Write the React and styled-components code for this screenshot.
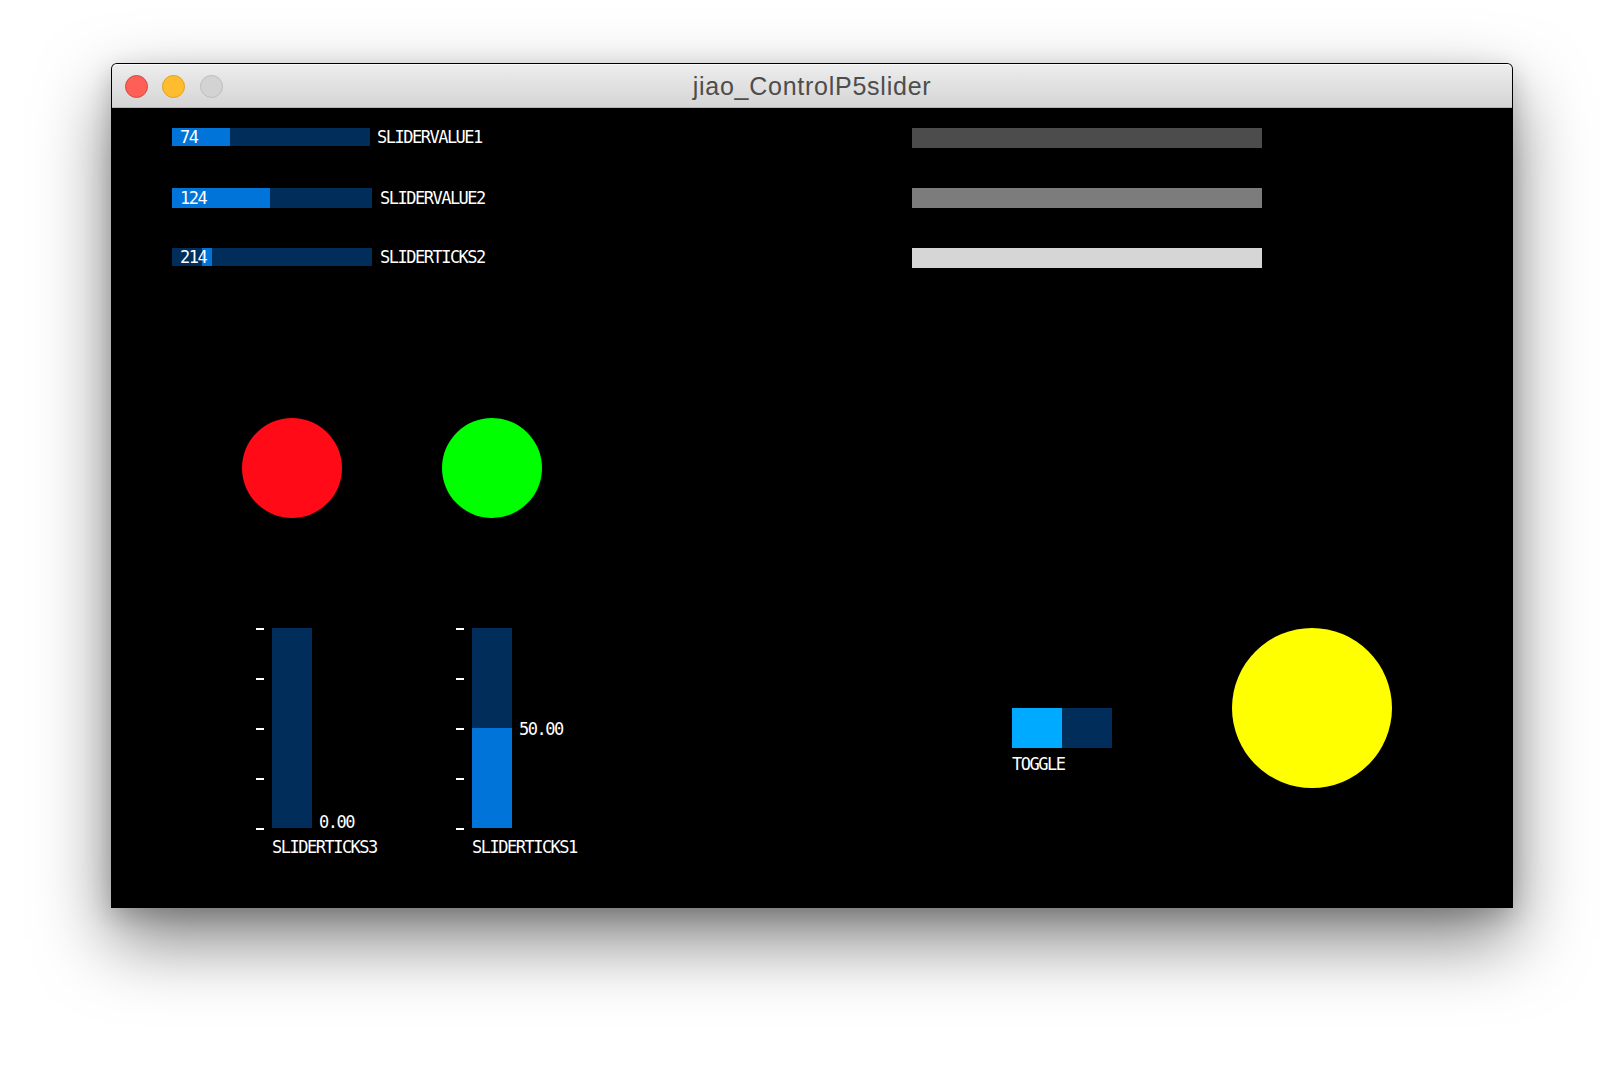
import React from "react";
import styled, { createGlobalStyle } from "styled-components";

const Global = createGlobalStyle`
  html, body { margin: 0; padding: 0; background: #ffffff; }
  body { width: 1624px; height: 1068px; overflow: hidden; }
  * { box-sizing: border-box; }
`;

const PIXEL_FONT = `"DejaVu Sans Mono", "Liberation Mono", monospace`;

const Page = styled.div`
  display: flex;
  padding: 63px 0 0 111px;
  width: 1624px;
  height: 1068px;
`;

const Window = styled.div`
  width: 1402px;
  display: flex;
  flex-direction: column;
  border: 1px solid rgba(0, 0, 0, 0.18);
  border-bottom: none;
  border-radius: 6px 6px 0 0;
  align-self: flex-start;
  box-shadow: 0 32px 72px rgba(0, 0, 0, 0.5), 0 8px 24px rgba(0, 0, 0, 0.18);
  background: #000;
`;

const TitleBar = styled.div`
  height: 44px;
  display: grid;
  grid-template-columns: 200px 1fr 200px;
  align-items: center;
  background: linear-gradient(#ededed, #d5d5d5);
  border-radius: 5px 5px 0 0;
  border-bottom: 1px solid #b3b3b3;
  box-shadow: inset 0 1px 0 rgba(255, 255, 255, 0.7);
`;

const Lights = styled.div`
  display: flex;
  gap: 14.3px;
  padding-left: 13px;
  padding-top: 1px;
`;

const Light = styled.span`
  width: 23px;
  height: 23px;
  border-radius: 50%;
  background: ${(p) => p.$fill};
  border: 1px solid ${(p) => p.$edge};
`;

const Title = styled.div`
  text-align: center;
  font-family: "Liberation Sans", Arial, sans-serif;
  font-size: 25px;
  letter-spacing: 0.75px;
  color: #4d4d4d;
  padding-top: 1px;
`;

const Canvas = styled.div`
  width: 1400px;
  height: 800px;
  background: #000;
  display: flex;
  flex-direction: column;
  font-family: ${PIXEL_FONT};
  color: #fff;
`;

const TopArea = styled.div`
  display: flex;
  padding: 20px 0 0 60px;
`;

const SliderColumn = styled.div`
  width: 740px;
  display: flex;
  flex-direction: column;
`;

const SliderRow = styled.div`
  display: flex;
  align-items: center;
  margin-top: ${(p) => p.$top}px;
`;

const HBar = styled.div`
  position: relative;
  width: ${(p) => p.$w}px;
  height: ${(p) => p.$h}px;
  background: #002d5a;
  display: flex;
  align-items: center;
`;

const HFill = styled.div`
  position: absolute;
  top: 0;
  bottom: 0;
  background: #0074d9;
`;

const PixelText = styled.span`
  font-family: ${PIXEL_FONT};
  font-size: 17px;
  line-height: 17px;
  letter-spacing: -1.5px;
  color: #ffffff;
  white-space: nowrap;
`;

const HValue = styled(PixelText)`
  position: relative;
  padding-left: 8px;
`;

const HLabel = styled(PixelText)`
  margin-left: ${(p) => p.$gap}px;
`;

const GrayColumn = styled.div`
  display: flex;
  flex-direction: column;
  gap: 40px;
`;

const GrayBar = styled.div`
  width: 350px;
  height: 20px;
  background: ${(p) => p.$c};
`;

const CircleRow = styled.div`
  display: flex;
  gap: 100px;
  margin-top: 150px;
  padding-left: 130px;
`;

const Dot = styled.div`
  width: ${(p) => p.$d}px;
  height: ${(p) => p.$d}px;
  border-radius: 50%;
  background: ${(p) => p.$c};
`;

const BottomRow = styled.div`
  display: flex;
  margin-top: 110px;
  padding-left: 144px;
`;

const VGroup = styled.div`
  width: ${(p) => p.$w}px;
  display: flex;
  flex-direction: column;
`;

const VTop = styled.div`
  display: flex;
  gap: 8px;
`;

const Ticks = styled.div`
  width: 8px;
  height: 202px;
  display: flex;
  flex-direction: column;
  justify-content: space-between;
`;

const Tick = styled.span`
  width: 8px;
  height: 2px;
  background: #ffffff;
`;

const VBar = styled.div`
  position: relative;
  width: 40px;
  height: 200px;
  background: #002d5a;
  display: flex;
  flex-direction: column;
  justify-content: flex-end;
`;

const VFill = styled.div`
  width: 100%;
  background: #0074d9;
`;

const VValue = styled(PixelText)`
  position: absolute;
  left: calc(100% + 7px);
`;

const VLabel = styled(PixelText)`
  margin: 9px 0 0 16px;
`;

const ToggleGroup = styled.div`
  width: 220px;
  margin-top: 80px;
  display: flex;
  flex-direction: column;
`;

const ToggleBox = styled.div`
  display: flex;
  width: 100px;
  height: 40px;
`;

const ToggleHalf = styled.div`
  flex: 1;
  background: ${(p) => (p.$on ? "#00aaff" : "#002d5a")};
`;

const ToggleLabel = styled(PixelText)`
  margin-top: 8px;
`;

function HSlider({ top, w, h, value, fillLeft, fillWidth, label, gap }) {
  return (
    <SliderRow $top={top}>
      <HBar $w={w} $h={h}>
        <HFill style={{ left: fillLeft, width: fillWidth }} />
        <HValue>{value}</HValue>
      </HBar>
      <HLabel $gap={gap}>{label}</HLabel>
    </SliderRow>
  );
}

function VSlider({ value, label, width }) {
  const H = 200;
  const pos = H * (1 - value / 100);
  const textTop = Math.min(pos - 7, H - 14);
  return (
    <VGroup $w={width}>
      <VTop>
        <Ticks>
          {[0, 1, 2, 3, 4].map((i) => (
            <Tick key={i} />
          ))}
        </Ticks>
        <VBar>
          <VFill style={{ height: (H * value) / 100 }} />
          <VValue style={{ top: textTop }}>{value.toFixed(2)}</VValue>
        </VBar>
      </VTop>
      <VLabel>{label}</VLabel>
    </VGroup>
  );
}

export default function App() {
  return (
    <>
      <Global />
      <Page>
        <Window>
          <TitleBar>
            <Lights>
              <Light $fill="#fe5f57" $edge="#e0443e" />
              <Light $fill="#febc2e" $edge="#dea123" />
              <Light $fill="#d3d3d3" $edge="#bdbdbd" />
            </Lights>
            <Title>jiao_ControlP5slider</Title>
            <span />
          </TitleBar>
          <Canvas>
            <TopArea>
              <SliderColumn>
                <HSlider top={0} w={198} h={18} value="74" fillLeft={0} fillWidth={58} label="SLIDERVALUE1" gap={7} />
                <HSlider top={42} w={200} h={20} value="124" fillLeft={0} fillWidth={98} label="SLIDERVALUE2" gap={8} />
                <HSlider top={40} w={200} h={18} value="214" fillLeft={30} fillWidth={10} label="SLIDERTICKS2" gap={8} />
              </SliderColumn>
              <GrayColumn>
                <GrayBar $c="#4c4c4c" />
                <GrayBar $c="#7c7c7c" />
                <GrayBar $c="#d6d6d6" />
              </GrayColumn>
            </TopArea>
            <CircleRow>
              <Dot $d={100} $c="#ff0a16" />
              <Dot $d={100} $c="#00ff00" />
            </CircleRow>
            <BottomRow>
              <VSlider value={0} label="SLIDERTICKS3" width={200} />
              <VSlider value={50} label="SLIDERTICKS1" width={556} />
              <ToggleGroup>
                <ToggleBox>
                  <ToggleHalf $on />
                  <ToggleHalf />
                </ToggleBox>
                <ToggleLabel>TOGGLE</ToggleLabel>
              </ToggleGroup>
              <Dot $d={160} $c="#ffff00" />
            </BottomRow>
          </Canvas>
        </Window>
      </Page>
    </>
  );
}
